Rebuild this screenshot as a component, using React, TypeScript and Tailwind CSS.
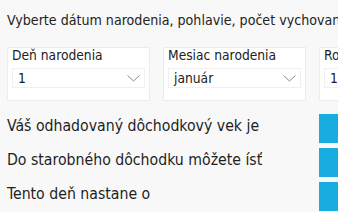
import React from "react";

function Chevron() {
  return (
    <svg width="13" height="7" viewBox="0 0 13 7" className="shrink-0">
      <path d="M0.5 0.5 L6.5 6 L12.5 0.5" fill="none" stroke="#8a8a8a" strokeWidth="1" />
    </svg>
  );
}

function SelectCard({ label, value, w }: { label: string; value: string; w: string }) {
  return (
    <div className={`${w} shrink-0 h-[54px] bg-white border border-[#ececec] px-[4px] pt-0`}>
      <div className="text-[13.7px] leading-[14px] text-[#222] whitespace-nowrap">{label}</div>
      <div className="mt-[6px] h-[20px] border border-[#f0f0f0] bg-white flex items-center justify-between pl-[5px] pr-[4px]">
        <span className="text-[13.7px] leading-[16px] text-[#222] whitespace-nowrap">{value}</span>
        <Chevron />
      </div>
    </div>
  );
}

function ResultRow({ text }: { text: string }) {
  return (
    <div className="flex items-start h-[29px]">
      <div className="w-[312px] shrink-0 pt-[2px] text-[15.7px] leading-[20px] text-[#1e1e1e] whitespace-nowrap">{text}</div>
      <div className="w-[120px] h-[29px] shrink-0 bg-[#18ade1]" />
    </div>
  );
}

export default function App() {
  return (
    <div
      className="w-[338px] h-[212px] overflow-hidden bg-[#f8f8f8] pl-[7px] font-stretch-condensed"
      style={{ fontFamily: '"DejaVu Sans Condensed", "DejaVu Sans", sans-serif' }}
    >
      <div className="pt-[12px] text-[14.1px] leading-[16px] text-[#222] whitespace-nowrap">
        Vyberte dátum narodenia, pohlavie, počet vychovaných detí a zistite, kedy môžete ísť do dôchodku.
      </div>
      <div className="mt-[19px] flex gap-[13px]">
        <SelectCard label="Deň narodenia" value="1" w="w-[143px]" />
        <SelectCard label="Mesiac narodenia" value="január" w="w-[143px]" />
        <SelectCard label="Rok narodenia" value="1980" w="w-[143px]" />
      </div>
      <div className="mt-[13px] flex flex-col gap-[5px]">
        <ResultRow text="Váš odhadovaný dôchodkový vek je" />
        <ResultRow text="Do starobného dôchodku môžete ísť" />
        <ResultRow text="Tento deň nastane o" />
      </div>
    </div>
  );
}
